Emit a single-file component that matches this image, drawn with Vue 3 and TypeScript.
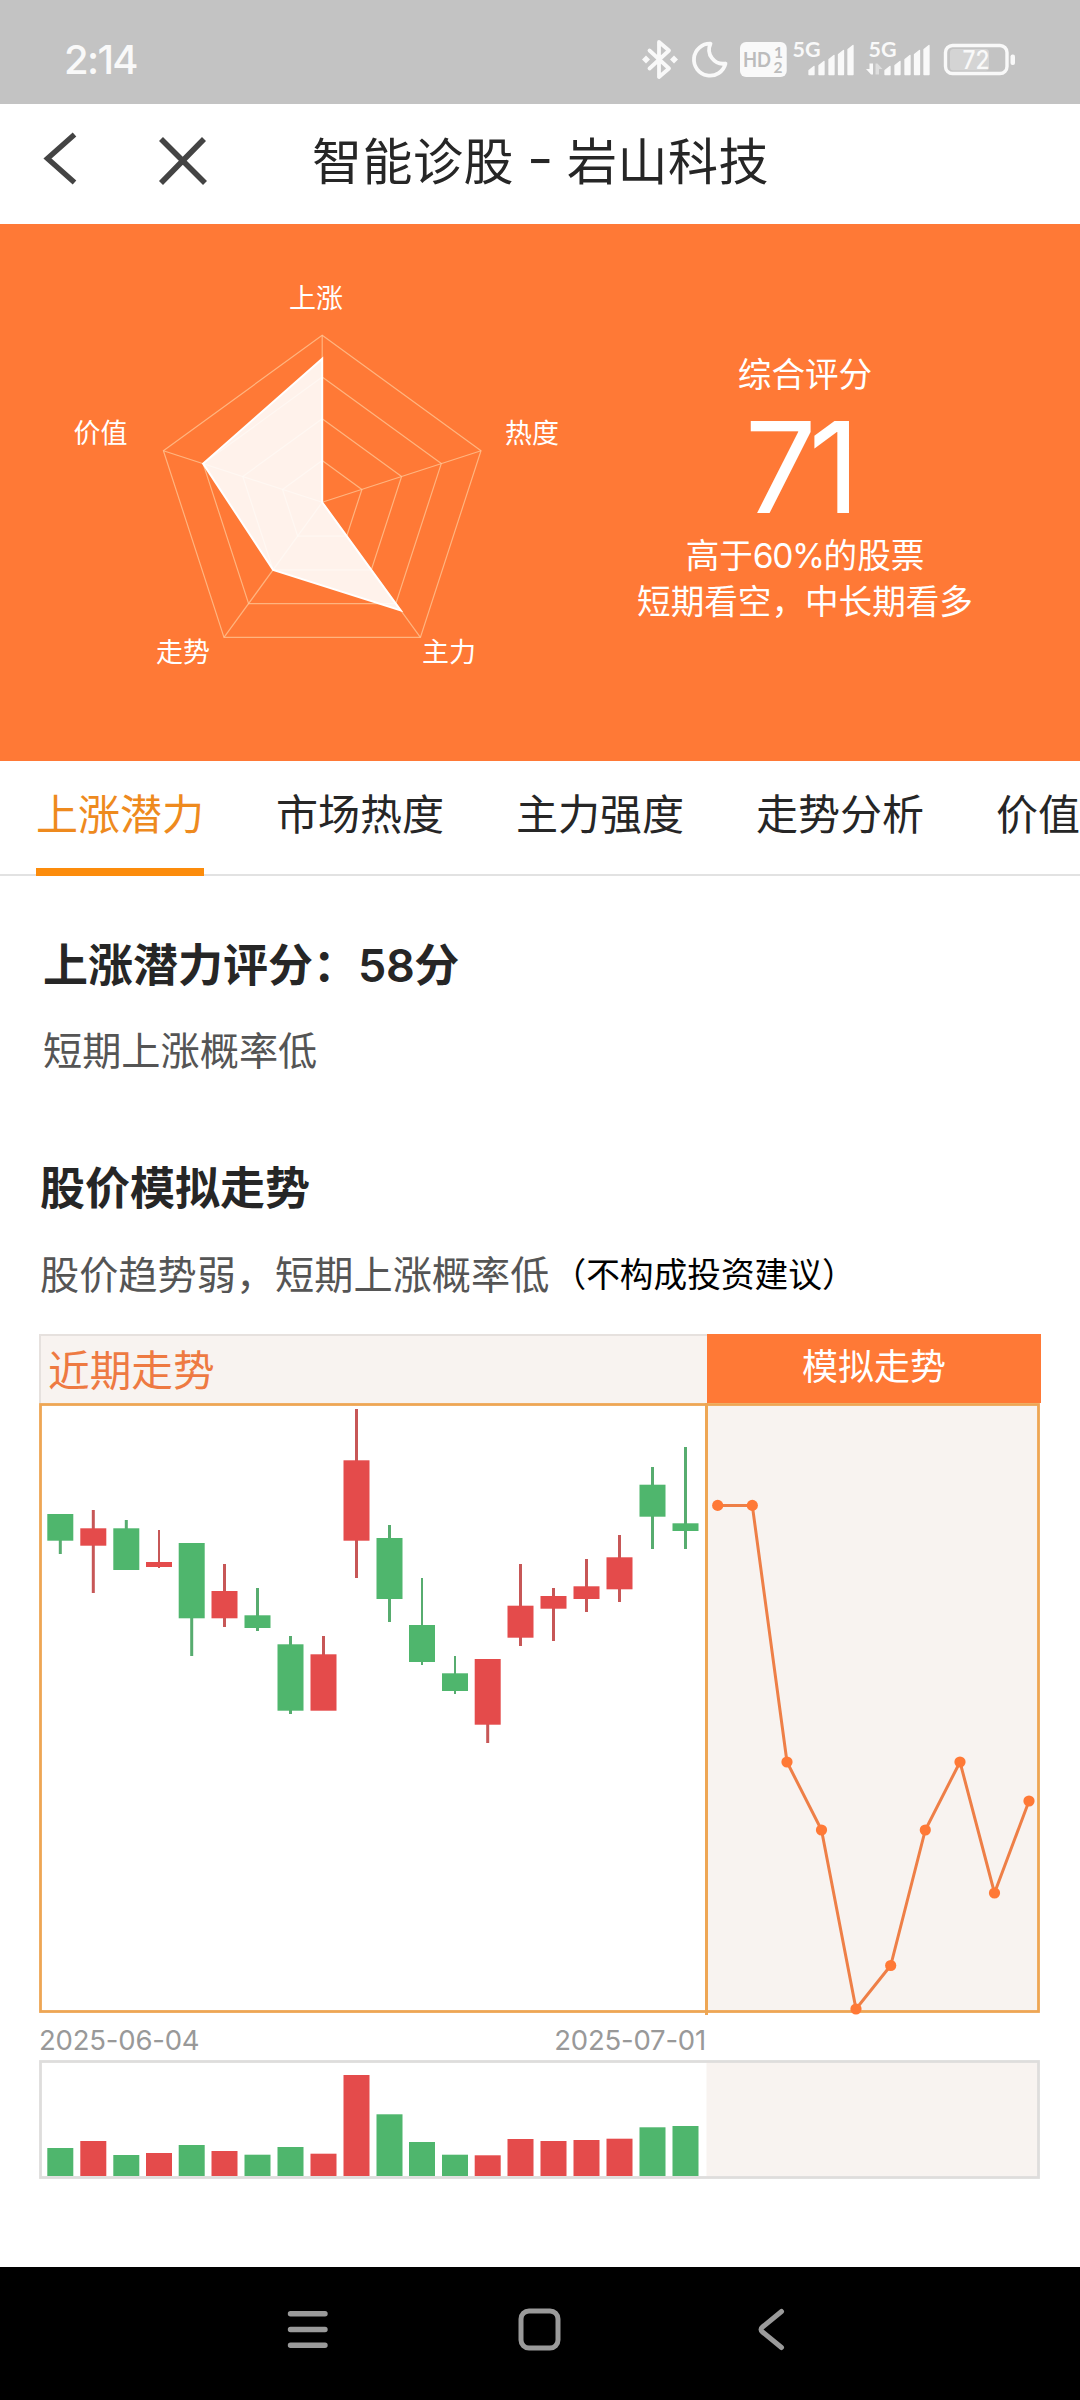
<script setup lang="ts">
type Tone = 'up' | 'down'

interface Candle {
  x: number
  tone: Tone
  top: number
  bottom: number
  high: number
  low: number
  volume: number
  thin?: boolean
}

const tabs: string[] = ['上涨潜力', '市场热度', '主力强度', '走势分析', '价值评估']

// Radar chart geometry
const cx = 322.2
const cy = 278.3
const radius = 167

function vertex(index: number, ratio: number): string {
  const angle = (index * 72 * Math.PI) / 180
  const x = cx + radius * ratio * Math.sin(angle)
  const y = cy - radius * ratio * Math.cos(angle)
  return `${x.toFixed(1)},${y.toFixed(1)}`
}

function ring(ratio: number): string {
  return [0, 1, 2, 3, 4].map((i) => vertex(i, ratio)).join(' ')
}

const rings: string[] = [0.25, 0.5, 0.75, 1].map(ring)
const spokes: string[] = [0, 1, 2, 3, 4].map((i) => `M${cx},${cy} L${vertex(i, 1)}`)
const scores: number[] = [0.86, 0, 0.8, 0.5, 0.75]
const scoreShape: string = scores.map((s, i) => vertex(i, s)).join(' ')

const radarLabels = [
  { text: '上涨', x: 316, y: 84 },
  { text: '热度', x: 532, y: 219 },
  { text: '主力', x: 449, y: 438 },
  { text: '走势', x: 183, y: 438 },
  { text: '价值', x: 100.5, y: 219 },
]

// Positions in the chart's own units, origin at the plot's top left corner
const candles: Candle[] = [
  { x: 21.3, tone: 'down', top: 111, bottom: 137.7, high: 111, low: 151, volume: 28 },
  { x: 54.3, tone: 'up', top: 125.3, bottom: 142.7, high: 107, low: 190, volume: 35 },
  { x: 87.3, tone: 'down', top: 125.3, bottom: 167, high: 117, low: 167, volume: 21 },
  { x: 120, tone: 'up', top: 159, bottom: 164, high: 127, low: 165, volume: 23, thin: true },
  { x: 152.7, tone: 'down', top: 140, bottom: 215.3, high: 140, low: 253, volume: 31 },
  { x: 185.5, tone: 'up', top: 188, bottom: 215.3, high: 161, low: 224, volume: 25 },
  { x: 218.5, tone: 'down', top: 212.3, bottom: 225, high: 185, low: 228, volume: 21.3 },
  { x: 251.5, tone: 'down', top: 241.3, bottom: 307.7, high: 233, low: 311, volume: 29 },
  { x: 284.5, tone: 'up', top: 251.3, bottom: 307.7, high: 233, low: 307, volume: 22.3 },
  { x: 317.5, tone: 'up', top: 57.3, bottom: 137.7, high: 6, low: 175, volume: 101 },
  { x: 350.5, tone: 'down', top: 135, bottom: 196, high: 122, low: 219, volume: 61.7 },
  { x: 383, tone: 'down', top: 222, bottom: 259, high: 175, low: 262, volume: 34, thin: true },
  { x: 416, tone: 'down', top: 270.3, bottom: 288, high: 253, low: 291, volume: 21.3, thin: true },
  { x: 448.7, tone: 'up', top: 256, bottom: 321.7, high: 256, low: 340, volume: 20.7 },
  { x: 481.5, tone: 'up', top: 202.7, bottom: 234.7, high: 161, low: 243, volume: 37 },
  { x: 514.5, tone: 'up', top: 193, bottom: 205.7, high: 185, low: 238, volume: 35 },
  { x: 547.5, tone: 'up', top: 183.3, bottom: 196, high: 156, low: 209, volume: 36 },
  { x: 580.5, tone: 'up', top: 154.3, bottom: 186.3, high: 132, low: 199, volume: 37.3 },
  { x: 613.5, tone: 'down', top: 81.7, bottom: 113.7, high: 64, low: 146, volume: 48.7 },
  { x: 646.5, tone: 'down', top: 120.3, bottom: 128, high: 44, low: 146, volume: 50 },
]

const forecast: [number, number][] = [
  [678.7, 102.4],
  [713.3, 102.4],
  [748, 359],
  [782.5, 427],
  [817, 606],
  [851.7, 562.5],
  [886.3, 427],
  [921, 359],
  [955.5, 490],
  [990, 398],
]
const forecastLine: string = forecast.map((p) => p.join(',')).join(' ')

const signalBars: string[] = [
  'M1,29 v-4 l5,-4 v8 z',
  'M11,29 v-9 l5,-4 v13 z',
  'M21,29 v-15 l5,-4 v19 z',
  'M30.5,29 v-20 l5,-4 v24 z',
  'M40,29 v-25 l5,-4 v29 z',
]
</script>

<template>
  <div class="screen">
    <header class="status">
      <span class="clock">2:14</span>
      <svg class="status-icons" width="380" height="44" viewBox="640 38 380 44">
        <g fill="none" stroke="#f9f9f9" stroke-linecap="round" stroke-linejoin="round">
          <path d="M649.5 50.5 L669 68.500 L659 77 V42 L669 50.500 L649.5 68.500" stroke-width="3.800" />
          <path
            d="M710.5 43.700 A16 16 0 1 0 725.5 63.500 A14 14 0 0 1 710.5 43.700 Z"
            stroke-width="3.800"
          />
        </g>
        <g fill="#f9f9f9">
          <path d="M646 55.500 l4 4 l-4 4 l-4 -4 z M674 55.500 l4 4 l-4 4 l-4 -4 z" />
          <rect x="740" y="42" width="46.700" height="35" rx="6" />
          <g transform="translate(808 45.500)">
            <path v-for="bar in signalBars" :key="bar" :d="bar" stroke="#f9f9f9" stroke-width="1.300" stroke-linejoin="round" />
          </g>
          <g transform="translate(884 45.500)">
            <path v-for="bar in signalBars" :key="bar" :d="bar" stroke="#f9f9f9" stroke-width="1.300" stroke-linejoin="round" />
          </g>
          <path d="M869.500 63.500 h3.500 v11 h-2 l-5 -5.500 h3.500 z" />
          <path d="M875.500 63.500 h2 l5 5.500 h-3.500 v5.500 h-3.500 z" opacity="0.500" />
          <rect x="1010.500" y="54.500" width="4.500" height="10.500" rx="2" />
        </g>
        <rect x="950" y="49" width="39" height="21.500" rx="3.500" fill="#d4d4d4" />
        <rect x="945.500" y="45.500" width="61.500" height="28" rx="7" fill="none" stroke="#f9f9f9" stroke-width="3.400" />
        <g class="icon-text">
          <text x="743" y="67" font-size="21" textLength="28" lengthAdjust="spacingAndGlyphs" fill="#bcbcbc">HD</text>
          <text x="774" y="58" font-size="15.500" fill="#bcbcbc">1</text>
          <text x="773.500" y="72.500" font-size="15.500" fill="#bcbcbc">2</text>
          <text x="792.500" y="56.500" font-size="20.500" textLength="28" lengthAdjust="spacingAndGlyphs" fill="#f9f9f9">5G</text>
          <text x="868.500" y="56.500" font-size="20.500" textLength="28" lengthAdjust="spacingAndGlyphs" fill="#f9f9f9">5G</text>
          <text class="level" x="962.500" y="68.500" font-size="25" textLength="27" lengthAdjust="spacingAndGlyphs" fill="#f9f9f9">72</text>
        </g>
      </svg>
    </header>

    <nav class="titlebar">
      <svg class="back" width="34" height="54" viewBox="0 0 34 54">
        <path d="M31.500 2.500 L4.500 26.500 L31.500 50.500" fill="none" stroke="#444" stroke-width="5.400" />
      </svg>
      <svg class="close" width="50" height="50" viewBox="0 0 50 50">
        <path d="M3 3 L47 47 M46 3 L3 47" fill="none" stroke="#444" stroke-width="5.600" />
      </svg>
      <h1>智能诊股<span class="dash">-</span>岩山科技</h1>
    </nav>

    <section class="hero">
      <svg class="radar" width="600" height="537" viewBox="0 0 600 537">
        <g fill="none" stroke="#ffc898" stroke-opacity="0.750" stroke-width="1.200">
          <polygon v-for="points in rings" :key="points" :points="points" />
          <path v-for="spoke in spokes" :key="spoke" :d="spoke" />
        </g>
        <polygon :points="scoreShape" fill="#fff" fill-opacity="0.900" stroke="#fff" stroke-width="2" />
        <text v-for="label in radarLabels" :key="label.text" :x="label.x" :y="label.y">{{ label.text }}</text>
      </svg>
      <div class="score">
        <p>综合评分</p>
        <strong>71</strong>
        <p>高于<span class="percent">60%</span>的股票</p>
        <p>短期看空，中长期看多</p>
      </div>
    </section>

    <div class="tabs">
      <div v-for="(tab, index) in tabs" :key="tab" class="tab" :class="{ active: index === 0 }">{{ tab }}</div>
    </div>

    <main>
      <section class="potential">
        <h2>上涨潜力评分：<span class="points">58</span>分</h2>
        <p>短期上涨概率低</p>
      </section>

      <section class="simulation">
        <h2>股价模拟走势</h2>
        <p>股价趋势弱，短期上涨概率低<small>（不构成投资建议）</small></p>

        <div class="chart-head">
          <div class="recent">近期走势</div>
          <div class="simulated">模拟走势</div>
        </div>
        <svg class="plot" width="1002" height="612" viewBox="0 0 1002 612">
          <rect x="667" y="1" width="333" height="608" fill="#f8f3f0" />
          <rect x="1.500" y="1.500" width="998" height="607" fill="none" stroke="#eea654" stroke-width="2.800" />
          <path d="M667.500 0 V612" stroke="#eea654" stroke-width="3" />
          <g v-for="candle in candles" :key="candle.x" :class="candle.tone">
            <rect
              class="wick"
              :x="candle.x - (candle.thin ? 1 : 1.5)"
              :y="candle.high"
              :width="candle.thin ? 2 : 3"
              :height="candle.low - candle.high"
            />
            <rect class="body" :x="candle.x - 13" :y="candle.top" width="26" :height="candle.bottom - candle.top" />
          </g>
          <polyline :points="forecastLine" fill="none" stroke="#ee7f47" stroke-width="3" />
          <circle v-for="point in forecast" :key="point[0]" :cx="point[0]" :cy="point[1]" r="5.600" fill="#ff7936" />
        </svg>
        <div class="dates">
          <span>2025-06-04</span>
          <span>2025-07-01</span>
        </div>
        <svg class="volume" width="1002" height="119" viewBox="0 0 1002 119">
          <rect x="667.500" y="1" width="332" height="117" fill="#f8f3f0" />
          <rect x="1.500" y="1.500" width="998" height="116" fill="none" stroke="#dedddc" stroke-width="2.800" />
          <g v-for="candle in candles" :key="candle.x" :class="candle.tone">
            <rect class="body" :x="candle.x - 13" :y="116 - candle.volume" width="26" :height="candle.volume" />
          </g>
        </svg>
      </section>
    </main>

    <footer class="sysnav">
      <svg width="1080" height="133" viewBox="0 0 1080 133">
        <g fill="none" stroke="#9a9a9a" stroke-width="5" stroke-linecap="round" stroke-linejoin="round">
          <path d="M290.500 46.700 H325 M290.500 62.500 H325 M290.500 78.300 H325" stroke-width="5.400" />
          <rect x="521" y="44" width="37" height="37" rx="8" />
          <path d="M781.500 44.500 L762.500 60 Q759.500 62.500 762.500 65 L781.500 80.500" />
        </g>
      </svg>
    </footer>
  </div>
</template>

<style>
body {
  margin: 0;
  background: #fff;
}
</style>

<style scoped>
.screen {
  display: flex;
  flex-direction: column;
  width: 1080px;
  height: 2400px;
  overflow: hidden;
  background: #fff;
  color: #262626;
  font-family: Inter, 'Noto Sans CJK SC', sans-serif;
}

h1,
h2,
p {
  margin: 0;
  font-weight: 400;
  white-space: nowrap;
}

svg {
  display: block;
  flex: none;
}

.status {
  display: flex;
  box-sizing: border-box;
  height: 104px;
  padding: 39px 60px 0 64px;
  justify-content: space-between;
  background: #c3c3c3;
}

.clock {
  font-size: 40px;
  line-height: 42px;
  font-weight: 500;
  letter-spacing: -1.7px;
  color: #f9f9f9;
}

.status-icons {
  margin-top: -1px;
}

.icon-text {
  font-family: Lato, sans-serif;
  font-weight: 700;
}

.level {
  font-family: Inter, sans-serif;
  font-weight: 500;
}

.titlebar {
  display: flex;
  align-items: center;
  box-sizing: border-box;
  height: 120px;
  padding: 0 0 10px 43px;
}

.close {
  margin-left: 81px;
  margin-top: 3px;
}

h1 {
  margin: 6px 0 0 104px;
  font-size: 50px;
  line-height: 60px;
  letter-spacing: 0.5px;
}

.dash {
  display: inline-block;
  width: 53px;
  text-align: center;
  transform: translateY(-3px) scaleX(1.15);
}

.hero {
  display: flex;
  height: 537px;
  background: #ff7936;
  color: #fff;
}

.radar text {
  font-size: 27px;
  text-anchor: middle;
  fill: #fff;
}

.score {
  width: 410px;
  padding-top: 128px;
  text-align: center;
}

.score p {
  font-size: 33.6px;
  line-height: 46px;
}

.score strong {
  display: block;
  box-sizing: border-box;
  height: 135px;
  padding-right: 13px;
  font-size: 127px;
  line-height: 139px;
  font-weight: 400;
  letter-spacing: -8px;
}

.percent {
  letter-spacing: -1.4px;
}

.tabs {
  display: flex;
  gap: 72px;
  box-sizing: border-box;
  height: 115px;
  padding-left: 36px;
  border-bottom: 2px solid #e2e2e2;
}

.tab {
  flex: none;
  box-sizing: border-box;
  height: 115px;
  padding-top: 32px;
  font-size: 42px;
  line-height: 43px;
  white-space: nowrap;
}

.tab.active {
  border-bottom: 8px solid #fc8c0c;
  color: #ee8a1e;
}

main {
  flex: 1;
}

h2 {
  font-size: 45px;
  line-height: 60px;
  font-weight: 700;
}

main p {
  font-size: 39.2px;
  line-height: 50px;
  color: #555;
}

.potential {
  padding: 60px 0 0 43px;
}

.potential p {
  margin-top: 30px;
}

.points {
  font-weight: 600;
  letter-spacing: -0.4px;
}

.simulation {
  padding: 83px 39px 0;
}

.simulation h2 {
  margin-left: 1px;
}

.simulation p {
  height: 50px;
  margin: 31px 0 34px 1px;
}

small {
  margin-left: 3px;
  font-size: 33.7px;
  line-height: 0;
  vertical-align: 2px;
  color: #000;
}

.chart-head {
  display: flex;
  height: 69px;
}

.recent {
  flex: 0 0 668px;
  box-sizing: border-box;
  padding-left: 7px;
  border-top: 2px solid #e6e1de;
  border-left: 2px solid #e6e1de;
  background: #f8f3f0;
  font-size: 41.7px;
  line-height: 71px;
  color: #ee7a42;
}

.simulated {
  flex: 1;
  background: #ff7936;
  font-size: 36px;
  line-height: 67px;
  text-align: center;
  color: #fff;
}

.up .wick {
  fill: #c75757;
}

.up .body {
  fill: #e44b4b;
}

.down .wick {
  fill: #57ac6f;
}

.down .body {
  fill: #4fb66d;
}

.dates {
  display: flex;
  justify-content: space-between;
  width: 667px;
  height: 45px;
  font-size: 27.5px;
  line-height: 50px;
  letter-spacing: -0.2px;
  color: #999;
}

.sysnav {
  height: 133px;
  background: #000;
}
</style>
